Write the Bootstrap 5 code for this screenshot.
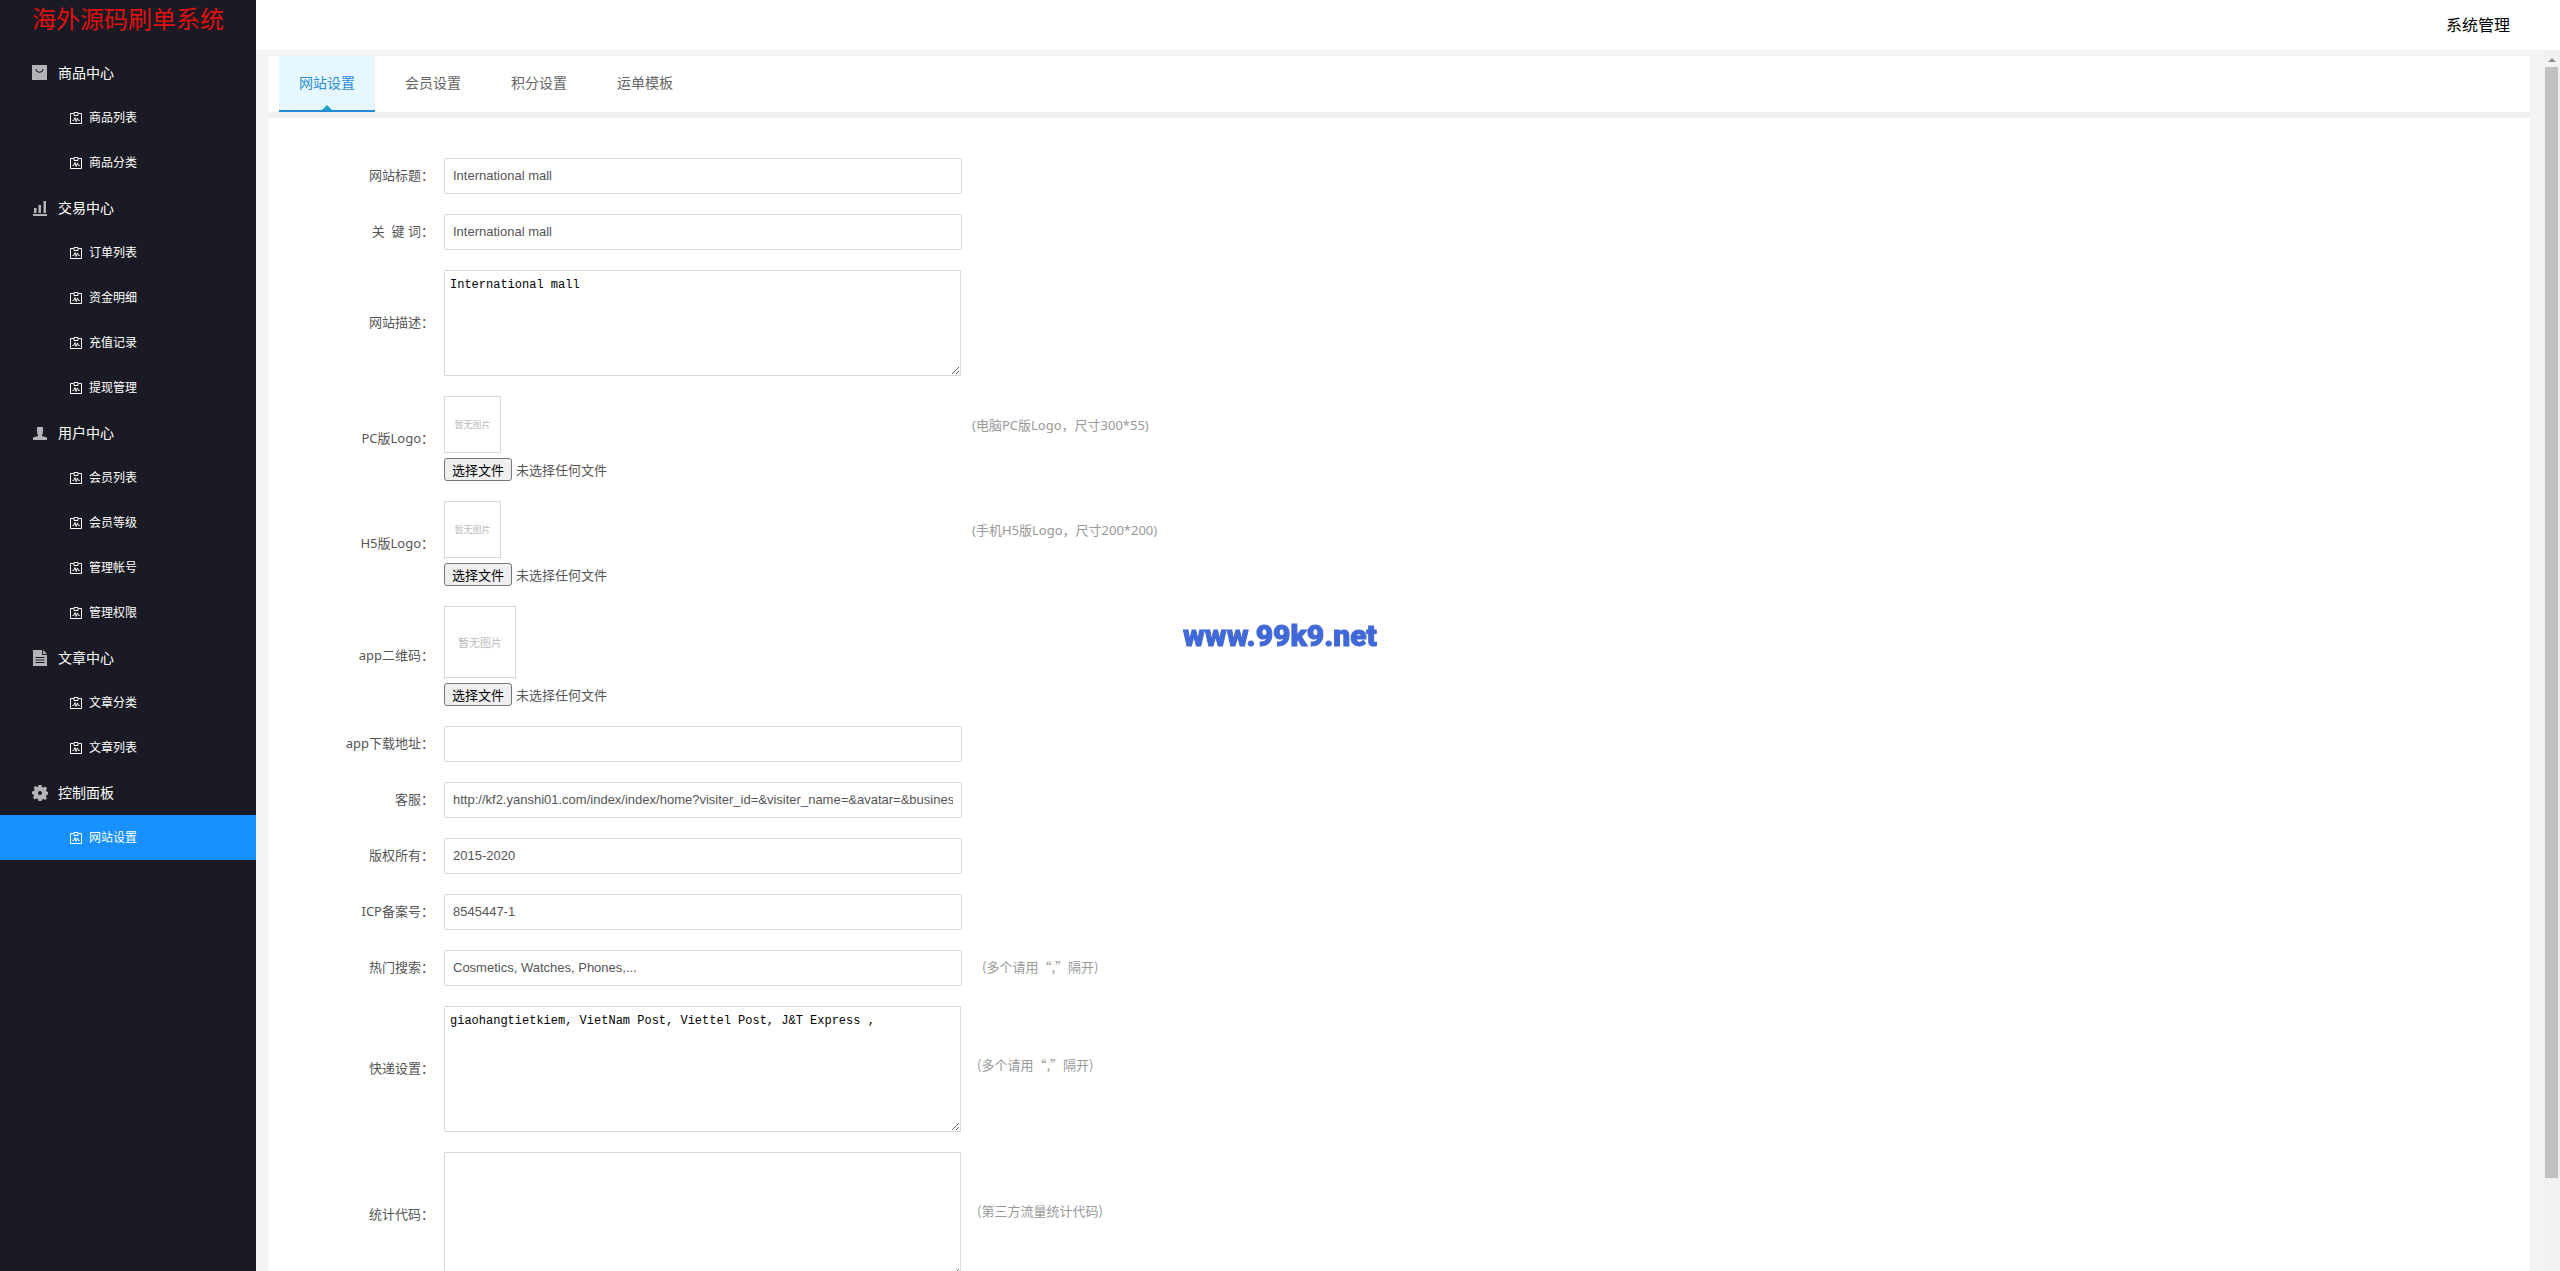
<!DOCTYPE html>
<html lang="zh-CN">
<head>
<meta charset="utf-8">
<meta name="viewport" content="width=device-width, initial-scale=1">
<title>网站设置</title>
<link href="https://cdn.jsdelivr.net/npm/bootstrap@5.3.0/dist/css/bootstrap.min.css" rel="stylesheet">
<style>
body{font-family:"Noto Sans","Noto Sans CJK SC",sans-serif;font-size:13px;line-height:20px;color:#555;background:#f4f4f4}
.side{width:256px;background:#191a23}
.brand{height:50px;padding:4px 32px;font-size:24px;line-height:30px;color:#e01010}
.side .nav-link{height:45px;display:flex;align-items:center;color:#fff;border-radius:0;padding:0}
.grp{padding-left:32px!important;gap:10px;font-size:14px}
.grp svg{width:16px;height:16px;fill:#b4b4b6}
.itm{padding-left:70px!important;gap:7px;font-size:12px}
.itm svg{width:12px;height:14px;fill:none;stroke:#fff}
.side .nav-link.active{background:#1890ff}
.topbar{height:50px;background:#fff;padding-right:50px;font-size:16px;color:#000}
.frame{padding:6px 13px 0}
.panels{background:#efefef;gap:6px}
.tabs{height:56px;padding-left:10px;gap:10px;background:#fff}
.tabs a{width:96px;font-size:14px;color:#666;text-decoration:none;border-bottom:2px solid transparent}
.tabs a.active{background:#e6f7ff;color:#2b8cd8;border-color:#2589d8;position:relative}
.tabs a.active::after{content:"";position:absolute;left:calc(50% - 5px);bottom:0;border:5px solid transparent;border-top:0;border-bottom-color:#17a2c8}
.sheet{background:#fff;padding:40px 0 40px 70px}
.line{margin-bottom:20px;min-height:36px}
.line>label{width:105px;padding:0 10px 2px 0;text-align:right;flex:none}
.box{width:518px;height:36px;flex:none;font:13px/20px "Liberation Sans",sans-serif;color:#555;border:1px solid #d8d8d8;border-radius:2px;padding:6px 8px 8px}
.area{width:517px;flex:none;resize:both;font:12px/16px "Liberation Mono",monospace;color:#000;border:1px solid #d8d8d8;border-radius:1px;padding:6px 5px;overflow:hidden}
.h106{height:106px}.h126{height:126px}
.pic{width:57px;height:57px;border:1px solid #d8d8d8;color:#bbb;font:9px/1 "Noto Sans CJK SC",sans-serif}
.pic-lg{width:72px;height:72px;font-size:11px}
.upload{width:518px;gap:5px}
.pick{height:23px;padding:0 7px;font:13px/20px "Noto Sans CJK SC",sans-serif;color:#000;background:#efefef;border:1px solid #767676;border-radius:3px}
.hint{color:#999;padding-left:10px}
.hint-up{padding-bottom:28px}
.hint-side{padding:0 0 2px 20px;font-family:"Noto Sans CJK SC",sans-serif}
.hint-mid{padding-left:16px;padding-bottom:8px;font-family:"Noto Sans CJK SC",sans-serif}
.bar{width:17px;background:#f1f1f1}
.bar i{display:block}
.arrow{margin:8px 5px 5px;border:4px solid transparent;border-top:0;border-bottom-color:#909090;width:8px}
.thumb{height:91%;margin:0 2px;background:#c1c1c1}
.stamp{left:50%;top:50%;transform:translate(-50%,-50%);font:900 30px/40px Impact,Roboto,sans-serif;color:#4169d8;-webkit-text-stroke:1px #4169d8;pointer-events:none}
</style>
</head>
<body>
<svg class="d-none">
<symbol id="clip" viewBox="0 0 12 14"><path d="M3.500 2.500H.5v10h11v-10H8.500M4 1.500h4v3H4zM2.500 9.500h1.200L5 6.500l1.200 4L7.500 7l1 2.500h1.200"/></symbol>
</svg>
<div class="d-flex vh-100 overflow-hidden">
<aside class="side flex-shrink-0">
<div class="brand text-nowrap">海外源码刷单系统</div>
<nav class="nav flex-column">
<a class="nav-link grp" href="#"><svg viewBox="0 0 16 16"><path fill-rule="evenodd" d="M0 0h15v15H0zM3.500 4c0 5 8 5 8 0h-1c0 3.500-6 3.500-6 0z"/></svg>商品中心</a>
<a class="nav-link itm" href="#"><svg><use href="#clip"/></svg>商品列表</a>
<a class="nav-link itm" href="#"><svg><use href="#clip"/></svg>商品分类</a>
<a class="nav-link grp" href="#"><svg viewBox="0 0 16 16"><path d="M1 14h14v2H1zM2 8h2.500v5H2zM6.500 5H9v8H6.500zM11.500 1H14v12h-2.500z"/></svg>交易中心</a>
<a class="nav-link itm" href="#"><svg><use href="#clip"/></svg>订单列表</a>
<a class="nav-link itm" href="#"><svg><use href="#clip"/></svg>资金明细</a>
<a class="nav-link itm" href="#"><svg><use href="#clip"/></svg>充值记录</a>
<a class="nav-link itm" href="#"><svg><use href="#clip"/></svg>提现管理</a>
<a class="nav-link grp" href="#"><svg viewBox="0 0 16 16"><path d="M5 2h6v6l-1 2v1l5 1.500V15H1v-2.500L6 11v-1L5 8z"/></svg>用户中心</a>
<a class="nav-link itm" href="#"><svg><use href="#clip"/></svg>会员列表</a>
<a class="nav-link itm" href="#"><svg><use href="#clip"/></svg>会员等级</a>
<a class="nav-link itm" href="#"><svg><use href="#clip"/></svg>管理帐号</a>
<a class="nav-link itm" href="#"><svg><use href="#clip"/></svg>管理权限</a>
<a class="nav-link grp" href="#"><svg viewBox="0 0 16 16"><path fill-rule="evenodd" d="M1 0h9v5h5v11H1zM11 0l4 4h-4zM3.500 7v1h9V7zM3.500 9.500v1h9v-1zM3.500 12v1h9v-1z"/></svg>文章中心</a>
<a class="nav-link itm" href="#"><svg><use href="#clip"/></svg>文章分类</a>
<a class="nav-link itm" href="#"><svg><use href="#clip"/></svg>文章列表</a>
<a class="nav-link grp" href="#"><svg viewBox="0 0 16 16"><path fill-rule="evenodd" d="M6.500 0h3l.5 2 1.500.6 2-1 1.500 1.900-1 1.800.5 1.200 1.500.5v2.500l-1.500.5-.6 1.500 1 2-1.900 1.500-1.800-1-1.200.5-.5 1.500H6.500L6 14l-1.500-.6-2 1L1 12.500l1-1.800L1.500 9.500 0 9V6.500L2 6l.6-1.500-1-2L3.500 1l1.800 1L6 2zM8 6a2 2 0 1 0 .01 0z"/></svg>控制面板</a>
<a class="nav-link itm active" href="#"><svg><use href="#clip"/></svg>网站设置</a>
</nav>
</aside>
<div class="d-flex flex-column flex-grow-1">
<header class="topbar d-flex align-items-center justify-content-end flex-shrink-0">系统管理</header>
<div class="d-flex flex-grow-1 overflow-hidden">
<main class="frame flex-grow-1 overflow-hidden">
<div class="panels d-flex flex-column">
<nav class="tabs d-flex">
<a class="active d-flex align-items-center justify-content-center" href="#">网站设置</a>
<a class="d-flex align-items-center justify-content-center" href="#">会员设置</a>
<a class="d-flex align-items-center justify-content-center" href="#">积分设置</a>
<a class="d-flex align-items-center justify-content-center" href="#">运单模板</a>
</nav>
<form class="sheet">
<div class="line d-flex align-items-center"><label for="f1">网站标题：</label><input class="box" id="f1" value="International mall"></div>
<div class="line d-flex align-items-center"><label for="f2">关&nbsp; 键 词：</label><input class="box" id="f2" value="International mall"></div>
<div class="line d-flex align-items-center"><label for="f3">网站描述：</label><textarea class="area h106" id="f3">International mall</textarea></div>
<div class="line d-flex align-items-center"><label for="f4">PC版Logo：</label><div class="upload d-flex flex-column"><div class="pic d-flex align-items-center justify-content-center">暂无图片</div><div class="d-flex align-items-center gap-1"><button class="pick" type="button" onclick="f4.click()">选择文件</button><span>未选择任何文件</span><input class="d-none" type="file" id="f4"></div></div><span class="hint hint-up">(电脑PC版Logo，尺寸300*55)</span></div>
<div class="line d-flex align-items-center"><label for="f5">H5版Logo：</label><div class="upload d-flex flex-column"><div class="pic d-flex align-items-center justify-content-center">暂无图片</div><div class="d-flex align-items-center gap-1"><button class="pick" type="button" onclick="f5.click()">选择文件</button><span>未选择任何文件</span><input class="d-none" type="file" id="f5"></div></div><span class="hint hint-up">(手机H5版Logo，尺寸200*200)</span></div>
<div class="line d-flex align-items-center"><label for="f6">app二维码：</label><div class="upload d-flex flex-column"><div class="pic pic-lg d-flex align-items-center justify-content-center">暂无图片</div><div class="d-flex align-items-center gap-1"><button class="pick" type="button" onclick="f6.click()">选择文件</button><span>未选择任何文件</span><input class="d-none" type="file" id="f6"></div></div></div>
<div class="line d-flex align-items-center"><label for="f7">app下载地址：</label><input class="box" id="f7"></div>
<div class="line d-flex align-items-center"><label for="f8">客服：</label><input class="box" id="f8" value="http://kf2.yanshi01.com/index/index/home?visiter_id=&amp;visiter_name=&amp;avatar=&amp;business_id=1"></div>
<div class="line d-flex align-items-center"><label for="f9">版权所有：</label><input class="box" id="f9" value="2015-2020"></div>
<div class="line d-flex align-items-center"><label for="f10">ICP备案号：</label><input class="box" id="f10" value="8545447-1"></div>
<div class="line d-flex align-items-center"><label for="f11">热门搜索：</label><input class="box" id="f11" value="Cosmetics, Watches, Phones,..."><span class="hint hint-side">(多个请用“,”隔开)</span></div>
<div class="line d-flex align-items-center"><label for="f12">快递设置：</label><textarea class="area h126" id="f12">giaohangtietkiem, VietNam Post, Viettel Post, J&amp;T Express ,</textarea><span class="hint hint-mid">(多个请用“,”隔开)</span></div>
<div class="line d-flex align-items-center"><label for="f13">统计代码：</label><textarea class="area h126" id="f13"></textarea><span class="hint hint-mid">(第三方流量统计代码)</span></div>
</form>
</div>
</main>
<div class="bar flex-shrink-0" aria-hidden="true"><i class="arrow"></i><i class="thumb"></i></div>
</div>
</div>
</div>
<div class="stamp position-fixed">www.99k9.net</div>
<script src="https://cdn.jsdelivr.net/npm/bootstrap@5.3.0/dist/js/bootstrap.bundle.min.js"></script>
</body>
</html>
